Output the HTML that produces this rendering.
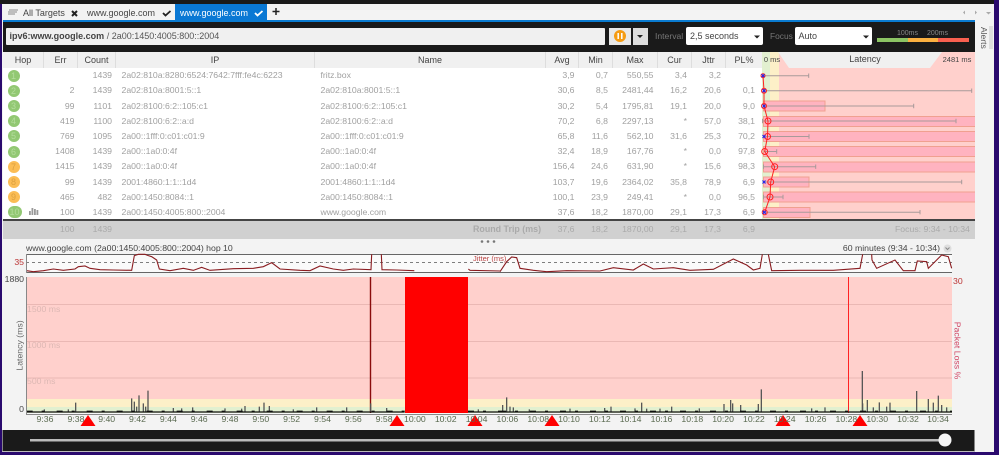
<!DOCTYPE html>
<html><head><meta charset="utf-8"><style>
html,body{margin:0;padding:0;width:999px;height:455px;overflow:hidden;background:#2a0a6e}
body{position:relative;font-family:"Liberation Sans",sans-serif;font-size:8.7px;color:#a0a0a0;filter:blur(.3px)}
div,span{position:absolute;white-space:nowrap}
.h{top:52px;height:16px;line-height:16px;color:#444;text-align:center;font-size:9px;background:#f0f0f0;border-right:1px solid #ddd;box-sizing:border-box}
.r{left:0;width:762px;height:15px;line-height:15px}
.e{left:40px;width:34.5px;text-align:right}.c{left:80px;width:32px;text-align:right}
.i{left:121.5px}.n{left:320.5px}
.a{left:540px;width:34.5px;text-align:right}.m{left:580px;width:28px;text-align:right}
.x{left:613px;width:40.5px;text-align:right}.u{left:660px;width:27px;text-align:right}
.j{left:694px;width:27px;text-align:right}.p{left:728px;width:27px;text-align:right}
.o{left:7.5px;width:12px;height:12px;border-radius:6px;top:1.5px;text-align:center;line-height:12px;background:#92c873;color:#b4dc9c;font-size:9px}
.y{background:#fbbd55;color:#dca040}
.t{top:414px;width:30px;text-align:center;color:#5a6a50;line-height:11px;font-size:8.7px}
.l{color:#ddb8b4;left:27px;font-size:8.7px;line-height:11px}
.b{color:#aaa}
</style></head><body>
<div style="left:0;top:0;width:994px;height:4px;background:#1a1a1a"></div>
<div style="left:2px;top:4px;width:992px;height:448px;background:#f3f3f3"></div>
<div style="left:3px;top:20px;width:972px;height:1.5px;background:#0a7bd0"></div>
<div style="left:175px;top:4px;width:92px;height:16px;background:#0a78d4"></div>
<span style="left:23px;top:7px;line-height:12px;font-size:9px;color:#444">All Targets</span>
<span style="left:87px;top:7px;line-height:12px;font-size:9px;color:#444">www.google.com</span>
<span style="left:180px;top:7px;line-height:12px;font-size:9px;color:#fff">www.google.com</span>
<div style="left:3px;top:22px;width:972px;height:30px;background:#1a1a1a"></div>
<div style="left:6px;top:28px;width:599px;height:17px;line-height:17px;background:#f0f0f0;font-size:9px;color:#555;box-sizing:border-box;padding-left:3.5px;border-radius:1px"><b style="color:#444">ipv6:www.google.com</b> / 2a00:1450:4005:800::2004</div>
<div style="left:609px;top:28px;width:22px;height:17px;background:#e8e8e8"></div>
<div style="left:633px;top:28px;width:15px;height:17px;background:#ddd"></div>
<span style="left:655px;top:30px;line-height:13px;font-size:8.6px;color:#777">Interval</span>
<div style="left:686px;top:27px;width:77px;height:18px;background:#fff;border-radius:2px;line-height:19px;color:#444;font-size:9px;box-sizing:border-box;padding-left:4px">2,5 seconds</div>
<span style="left:770px;top:30px;line-height:13px;font-size:8.4px;color:#777">Focus</span>
<div style="left:795px;top:27px;width:77px;height:18px;background:#fff;border-radius:2px;line-height:19px;color:#444;font-size:9px;box-sizing:border-box;padding-left:3.5px">Auto</div>
<span style="left:897px;top:29px;line-height:9px;font-size:7px;color:#888">100ms</span>
<span style="left:927px;top:29px;line-height:9px;font-size:7px;color:#888">200ms</span>
<div style="left:877px;top:38px;width:31px;height:4px;background:#8cc464"></div>
<div style="left:908px;top:38px;width:30px;height:4px;background:#fbb040"></div>
<div style="left:938px;top:38px;width:31px;height:4px;background:#f96050"></div>
<div style="left:975px;top:22px;width:19px;height:430px;background:#f3f3f3"></div>
<div style="left:989px;top:26px;width:4px;height:23px;background:#ddd"></div>
<span style="left:974px;top:31px;width:20px;text-align:center;transform:rotate(90deg);line-height:12px;color:#555;font-size:8.5px">Alerts</span>

<div style="left:3px;top:68px;width:759px;height:151px;background:#fff"></div>
<div class="h" style="left:3px;width:41px">Hop</div>
<div class="h" style="left:44px;width:34px">Err</div>
<div class="h" style="left:78px;width:38px">Count</div>
<div class="h" style="left:116px;width:199px">IP</div>
<div class="h" style="left:315px;width:231px">Name</div>
<div class="h" style="left:546px;width:33px">Avg</div>
<div class="h" style="left:579px;width:34px">Min</div>
<div class="h" style="left:613px;width:45px">Max</div>
<div class="h" style="left:658px;width:34px">Cur</div>
<div class="h" style="left:692px;width:34px">Jttr</div>
<div class="h" style="left:726px;width:36px;border:0">PL%</div>

<div class="r" style="top:68.2px"><span class="o">1</span><span class="c">1439</span><span class="i">2a02:810a:8280:6524:7642:7fff:fe4c:6223</span><span class="n">fritz.box</span><span class="a">3,9</span><span class="m">0,7</span><span class="x">550,55</span><span class="u">3,4</span><span class="j">3,2</span></div>
<div class="r" style="top:83.4px"><span class="o">2</span><span class="e">2</span><span class="c">1439</span><span class="i">2a02:810a:8001:5::1</span><span class="n">2a02:810a:8001:5::1</span><span class="a">30,6</span><span class="m">8,5</span><span class="x">2481,44</span><span class="u">16,2</span><span class="j">20,6</span><span class="p">0,1</span></div>
<div class="r" style="top:98.6px"><span class="o">3</span><span class="e">99</span><span class="c">1101</span><span class="i">2a02:8100:6:2::105:c1</span><span class="n">2a02:8100:6:2::105:c1</span><span class="a">30,2</span><span class="m">5,4</span><span class="x">1795,81</span><span class="u">19,1</span><span class="j">20,0</span><span class="p">9,0</span></div>
<div class="r" style="top:113.7px"><span class="o">4</span><span class="e">419</span><span class="c">1100</span><span class="i">2a02:8100:6:2::a:d</span><span class="n">2a02:8100:6:2::a:d</span><span class="a">70,2</span><span class="m">6,8</span><span class="x">2297,13</span><span class="u">*</span><span class="j">57,0</span><span class="p">38,1</span></div>
<div class="r" style="top:128.9px"><span class="o">5</span><span class="e">769</span><span class="c">1095</span><span class="i">2a00::1fff:0:c01:c01:9</span><span class="n">2a00::1fff:0:c01:c01:9</span><span class="a">65,8</span><span class="m">11,6</span><span class="x">562,10</span><span class="u">31,6</span><span class="j">25,3</span><span class="p">70,2</span></div>
<div class="r" style="top:144.1px"><span class="o">6</span><span class="e">1408</span><span class="c">1439</span><span class="i">2a00::1a0:0:4f</span><span class="n">2a00::1a0:0:4f</span><span class="a">32,4</span><span class="m">18,9</span><span class="x">167,76</span><span class="u">*</span><span class="j">0,0</span><span class="p">97,8</span></div>
<div class="r" style="top:159.3px"><span class="o y">7</span><span class="e">1415</span><span class="c">1439</span><span class="i">2a00::1a0:0:4f</span><span class="n">2a00::1a0:0:4f</span><span class="a">156,4</span><span class="m">24,6</span><span class="x">631,90</span><span class="u">*</span><span class="j">15,6</span><span class="p">98,3</span></div>
<div class="r" style="top:174.5px"><span class="o y">8</span><span class="e">99</span><span class="c">1439</span><span class="i">2001:4860:1:1::1d4</span><span class="n">2001:4860:1:1::1d4</span><span class="a">103,7</span><span class="m">19,6</span><span class="x">2364,02</span><span class="u">35,8</span><span class="j">78,9</span><span class="p">6,9</span></div>
<div class="r" style="top:189.6px"><span class="o y">9</span><span class="e">465</span><span class="c">482</span><span class="i">2a00:1450:8084::1</span><span class="n">2a00:1450:8084::1</span><span class="a">100,1</span><span class="m">23,9</span><span class="x">249,41</span><span class="u">*</span><span class="j">0,0</span><span class="p">96,5</span></div>
<div class="r" style="top:204.8px"><span class="o" style="width:14px">10</span><span class="e">100</span><span class="c">1439</span><span class="i">2a00:1450:4005:800::2004</span><span class="n">www.google.com</span><span class="a">37,6</span><span class="m">18,2</span><span class="x">1870,00</span><span class="u">29,1</span><span class="j">17,3</span><span class="p">6,9</span></div>

<div style="left:3px;top:219px;width:972px;height:1.5px;background:#444"></div>
<div style="left:3px;top:220.5px;width:972px;height:18px;background:#d0d0d0"></div>
<div class="r" style="top:221.5px"><span class="e b">100</span><span class="c b">1439</span><span class="b" style="left:473px;font-weight:bold;font-size:8.9px">Round Trip (ms)</span><span class="a b">37,6</span><span class="m b">18,2</span><span class="x b">1870,00</span><span class="u b">29,1</span><span class="j b">17,3</span><span class="p b">6,9</span></div>
<span class="b" style="left:895px;top:221.5px;width:73.5px;text-align:right;line-height:15px">Focus: 9:34 - 10:34</span>
<span style="left:26px;top:242px;line-height:12px;color:#444;font-size:8.7px">www.google.com (2a00:1450:4005:800::2004) hop 10</span>
<span style="left:800px;top:242px;width:140px;text-align:right;line-height:12px;color:#444;font-size:8.7px">60 minutes (9:34 - 10:34)</span>

<svg width="999" height="455" style="position:absolute;left:0;top:0">
<path d="M9 10h9M8 12h9M8 14h7" stroke="#888" stroke-width="1" fill="none"/>
<path d="M72 11l5 5M77 11l-5 5" stroke="#222" stroke-width="2"/>
<path d="M163 13l2.500 2.500 5-4.500" stroke="#222" stroke-width="1.800" fill="none"/>
<path d="M255 13l2.500 2.500 5-4.500" stroke="#fff" stroke-width="1.800" fill="none"/>
<path d="M276 8v7M272.500 11.500h7" stroke="#222" stroke-width="1.500"/>
<path d="M965 10.500v4l-2-2zM975 10.500v4l2-2zM986 12h5l-2.500 2.500z" fill="#aaa"/>
<circle cx="620" cy="36" r="6" fill="#f59b12"/>
<path d="M618.200 33v6M621.800 33v6" stroke="#fff" stroke-width="1.500"/>
<path d="M637 35h6l-3 3z" fill="#222"/>
<path d="M754 35.500h6l-3 3zM863 35.500h6l-3 3z" fill="#222"/>
<rect x="762" y="52" width="213" height="167" fill="#ffd0cc"/>
<rect x="762" y="52" width="8" height="167" fill="#e2f0d0"/>
<rect x="770" y="52" width="9" height="167" fill="#fdf0c8"/>
<path d="M778 52L789 68H930L942 52z" fill="#f0f0f0"/>
<g fill="#ffb3c0" stroke="#f0a090" stroke-width="1">
<rect x="763.500" y="101" width="61.500" height="10"/>
<rect x="763.500" y="116.500" width="213" height="10"/>
<rect x="763.500" y="131.500" width="213" height="10"/>
<rect x="763.500" y="146.500" width="213" height="10"/>
<rect x="763.500" y="162" width="213" height="10"/>
<rect x="763.500" y="177" width="45.500" height="10"/>
<rect x="763.500" y="192" width="213" height="10"/>
<rect x="763.500" y="207.500" width="46.500" height="10"/>
</g>
<rect x="975" y="100" width="3" height="120" fill="#f3f3f3"/>
<g stroke="#a89a9a" stroke-width="1" fill="none">
<path d="M763 75.700H808.700M808.700 73.500v4.400"/>
<path d="M763 90.700H971.700M971.700 88.500v4.400"/>
<path d="M763 106H913.700M913.700 103.800v4.400"/>
<path d="M762.500 121H956M956 118.800v4.400M762.500 118.800v4.400"/>
<path d="M763 136.500H809M809 134.300v4.400"/>
<path d="M764 151.500H776.700M776.700 149.300v4.400"/>
<path d="M763.500 166.700H815.700M815.700 164.500v4.400M763.500 164.500v4.400"/>
<path d="M763 182H961.700M961.700 179.800v4.400"/>
<path d="M763.500 197H783M783 194.800v4.400M763.500 194.800v4.400"/>
<path d="M763 212.300H920M920 210v4.400"/>
</g>
<path d="M763 75.700L764 90.700 764 106 768 121 767.500 136.500 764.700 151.500 774.700 166.700 770.700 182 770 197 764.700 212.300" stroke="#f22" stroke-width="1" fill="none"/>
<g stroke="#f22" stroke-width="1" fill="none">
<circle cx="763" cy="75.700" r="2"/><circle cx="764" cy="90.700" r="2.500"/><circle cx="764" cy="106" r="2.500"/><circle cx="768" cy="121" r="3"/><circle cx="767.500" cy="136.500" r="3"/><circle cx="764.700" cy="151.500" r="3"/><circle cx="774.700" cy="166.700" r="3"/><circle cx="770.700" cy="182" r="3"/><circle cx="770" cy="197" r="3"/><circle cx="764.700" cy="212.300" r="2.500"/>
</g>
<g stroke="#22e" stroke-width="1.100" fill="none">
<path d="M761.500 74.200l3 3M764.500 74.200l-3 3M762.500 89.200l3 3M765.500 89.200l-3 3M762.500 104.500l3 3M765.500 104.500l-3 3M762.500 135l3 3M765.500 135l-3 3M762.500 180.500l3 3M765.500 180.500l-3 3M762.800 210.800l3 3M765.800 210.800l-3 3"/>
</g>
<rect x="29" y="211" width="1.800" height="4" fill="#999"/><rect x="31.500" y="208" width="1.800" height="7" fill="#999"/><rect x="34" y="209" width="1.800" height="6" fill="#999"/><rect x="36.500" y="210" width="1.800" height="5" fill="#999"/>
<circle cx="482" cy="241.500" r="1.300" fill="#777"/><circle cx="488" cy="241.500" r="1.300" fill="#777"/><circle cx="494" cy="241.500" r="1.300" fill="#777"/>
<circle cx="947.500" cy="248.500" r="4" fill="#ddd"/><path d="M945.500 247.500l2 2 2-2" stroke="#888" fill="none"/>
<rect x="26" y="254.500" width="926" height="18" fill="#fafafa"/>
<path d="M26 254.500H952M26 272.500H952" stroke="#666" stroke-width="1"/>
<path d="M26.500 254.500V272.500" stroke="#888"/>
<path d="M26 262.500H952" stroke="#555" stroke-width=".8" stroke-dasharray="3 3"/>
<g transform="translate(0,125) scale(.33333)" fill="none" stroke="#8a1c20"><path vector-effect="non-scaling-stroke" stroke-width="1.100" d="M80 437L100 440 130 437 160 432 190 436 225 432 235 425 255 423 270 430 300 434 340 435 395 436 403 392 415 388 435 388 445 392 455 395 470 405 478 432 510 437 550 430 580 436 605 427 630 436 700 431 760 430 790 425 815 413 840 432 900 436 930 437 960 423 1000 432 1030 436 1060 432 1113 434 1115 388M1144 388L1146 434 1190 435 1243 437M1405 432L1410 436 1500 438"/></g>
<g transform="translate(500,125) scale(.33333)" fill="none" stroke="#8a1c20"><path vector-effect="non-scaling-stroke" stroke-width="1.100" d="M0 440L20 410 35 396 50 398 60 430 100 436 140 440 200 437 300 438 340 428 400 435 430 417 460 432 520 428 570 436 640 433 700 402 740 420 760 435 780 430 787 388M805 388L815 437 900 436 1000 436 1080 430 1088 388M1115 388L1116 405 1130 430 1185 405 1210 437 1245 437 1252 408 1280 410 1285 430 1325 390 1345 395 1355 430"/></g>
<text x="473" y="261" font-family="Liberation Sans" font-size="7.500" fill="#b44">Jitter (ms)</text>
<rect x="26.500" y="277" width="925.500" height="122" fill="#ffd0cc"/>
<rect x="26.500" y="399" width="925.500" height="8" fill="#fdf0c8"/>
<rect x="26.500" y="407" width="925.500" height="6" fill="#e2f0d0"/>
<path d="M27 304.500H952M27 341.500H952M27 378H952" stroke="#eab8b4" stroke-width="1"/>
<rect x="405" y="277" width="63" height="137" fill="#f00"/>
<path d="M370.500 277V414" stroke="#8a0c0c" stroke-width="1.400"/>
<path d="M848.500 277V414" stroke="#f22" stroke-width="1"/>
<g transform="translate(0,290) scale(.33333)" fill="none">
<path vector-effect="non-scaling-stroke" stroke="#555" stroke-width="1.300" d="M227 365V338M395 365V325M403 365V335M410 365V350M417 365V316M430 365V340M437 365V350M444 365V302M133 365V358M205 365V358M520 365V354M545 365V355M578 365V352M675 365V355M725 365V356M735 365V348M778 365V350M792 365V338M808 365V348M880 365V358M950 365V352M1040 365V352M1160 365V354M1112 365V340M1435 365V358"/>
<path vector-effect="non-scaling-stroke" stroke="#111" stroke-width="1.200" d="M80 366H1214M1404 366H1500"/>
<path vector-effect="non-scaling-stroke" stroke="#111" stroke-width="1" stroke-dasharray="6 9 3 12" d="M80 363.500H1214M1404 363.500H1500"/>
</g>
<g transform="translate(500,290) scale(.33333)" fill="none">
<path vector-effect="non-scaling-stroke" stroke="#555" stroke-width="1.300" d="M8 365V345M20 365V322M30 365V350M40 365V352M88 365V358M210 365V356M314 365V354M333 365V350M405 365V355M425 365V338M440 365V356M480 365V356M515 365V350M598 365V355M672 365V342M692 365V330M698 365V340M722 365V345M775 365V342M784 365V298M935 365V355M975 365V352M1088 365V340M1087 365V243M1102 365V330M1120 365V352M1138 365V337M1160 365V350M1170 365V338M1250 365V303M1285 365V327M1300 365V338M1315 365V317M1325 365V345M1340 365V352"/>
<path vector-effect="non-scaling-stroke" stroke="#111" stroke-width="1.200" d="M0 366H1356"/>
<path vector-effect="non-scaling-stroke" stroke="#111" stroke-width="1" stroke-dasharray="6 9 3 12" d="M0 363.500H1356"/>
</g>
<rect x="26.500" y="413" width="925.500" height="1" fill="#f8f8f8"/>
<path d="M26.500 254V414.500H952" stroke="#888" stroke-width="1" fill="none"/>
<rect x="26" y="273" width="926" height="4" fill="#f3f3f3"/>
<g fill="#f00"><path d="M88 415l7.500 11h-15zM397 415l7.500 11h-15zM475 415l7.500 11h-15zM552 415l7.500 11h-15zM783 415l7.500 11h-15zM860 415l7.500 11h-15z"/></g>
<rect x="2.500" y="430" width="972" height="21.500" fill="#1a1a1a"/>
<rect x="30" y="439" width="915" height="2.500" fill="#bbb"/>
<circle cx="945" cy="440" r="6.500" fill="#f5f5f5"/>
<path d="M2 451.500H975" stroke="#bbb"/>
</svg>

<span style="left:4px;top:274px;width:20px;text-align:right;line-height:11px;color:#444">1880</span>
<span style="left:4px;top:257px;width:20px;text-align:right;line-height:11px;color:#b33">35</span>
<span style="left:4px;top:404px;width:20px;text-align:right;line-height:11px;color:#444">0</span>
<span style="left:953px;top:276px;line-height:11px;color:#b33">30</span>
<span class="l" style="top:304px">1500 ms</span>
<span class="l" style="top:340px">1000 ms</span>
<span class="l" style="top:376px">500 ms</span>
<span style="left:-10px;top:340px;width:60px;text-align:center;line-height:11px;transform:rotate(-90deg);color:#666">Latency (ms)</span>
<span style="left:927px;top:345px;width:60px;text-align:center;line-height:11px;transform:rotate(90deg);color:#d04060">Packet Loss %</span>

<span class="t" style="left:30px">9:36</span><span class="t" style="left:61px">9:38</span><span class="t" style="left:91.700px">9:40</span><span class="t" style="left:122.500px">9:42</span><span class="t" style="left:153.400px">9:44</span><span class="t" style="left:184.200px">9:46</span><span class="t" style="left:215px">9:48</span><span class="t" style="left:245.800px">9:50</span><span class="t" style="left:276.600px">9:52</span><span class="t" style="left:307.500px">9:54</span><span class="t" style="left:338.300px">9:56</span><span class="t" style="left:369.100px">9:58</span><span class="t" style="left:399.900px">10:00</span><span class="t" style="left:430.700px">10:02</span><span class="t" style="left:461.600px">10:04</span><span class="t" style="left:492.400px">10:06</span><span class="t" style="left:523.200px">10:08</span><span class="t" style="left:554px">10:10</span><span class="t" style="left:584.800px">10:12</span><span class="t" style="left:615.600px">10:14</span><span class="t" style="left:646.500px">10:16</span><span class="t" style="left:677.300px">10:18</span><span class="t" style="left:708.100px">10:20</span><span class="t" style="left:738.900px">10:22</span><span class="t" style="left:769.700px">10:24</span><span class="t" style="left:800.600px">10:26</span><span class="t" style="left:831.400px">10:28</span><span class="t" style="left:862.200px">10:30</span><span class="t" style="left:893px">10:32</span><span class="t" style="left:923px">10:34</span>
<span style="left:762px;top:53px;width:20px;text-align:center;line-height:14px;font-size:7.500px;color:#444">0 ms</span>
<span style="left:940px;top:53px;width:34px;text-align:center;line-height:14px;font-size:7.500px;color:#444">2481 ms</span>
<span style="left:830px;top:52px;width:70px;text-align:center;line-height:14px;font-size:9px;color:#444">Latency</span>
</body></html>
